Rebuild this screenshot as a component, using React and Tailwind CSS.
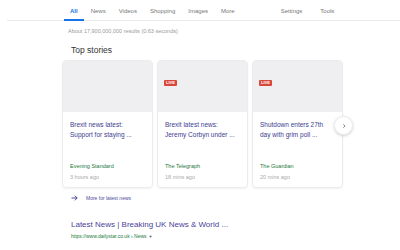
export default function App() {
  const tabs = ['All', 'News', 'Videos', 'Shopping', 'Images', 'More']
  const stories = [
    { live: false, title: ['Brexit news latest:', 'Support for staying ...'], source: 'Evening Standard', time: '3 hours ago' },
    { live: true, title: ['Brexit latest news:', 'Jeremy Corbyn under ...'], source: 'The Telegraph', time: '18 mins ago' },
    { live: true, title: ['Shutdown enters 27th', 'day with grim poll ...'], source: 'The Guardian', time: '20 mins ago' },
  ]

  return (
    <div className="w-[400px] h-[250px] bg-white overflow-hidden font-['Liberation_Sans',Arial,sans-serif] relative">
      <div className="ml-[7px] border-b border-[#ebebeb] h-[21px] flex items-start pl-[57px] relative">
        {tabs.map((t, i) => (
          <div
            key={t}
            className={
              'h-[21px] pt-[8px] text-[6px] leading-[7px] ' +
              (i === 0 ? 'text-[#1a73e8] font-bold border-b-[2px] border-[#1a73e8] px-[6px] mr-[7px]' : 'text-[#777] mr-[13px]')
            }
          >
            {t}
          </div>
        ))}
        <div className="ml-[33px] flex gap-[18px] pt-[8px] text-[6px] leading-[7px] text-[#777]">
          <span>Settings</span>
          <span>Tools</span>
        </div>
      </div>

      <div className="pl-[68px] pt-[7px] text-[5.5px] leading-[7px] text-[#9a9a9a]">
        About 17,900,000,000 results (0.63 seconds)
      </div>

      <div className="pl-[71px] pt-[10px] text-[8.5px] leading-[10px] text-[#333]">Top stories</div>

      <div className="pl-[62px] pt-[5px] flex gap-[4px] items-start relative">
        {stories.map((s, i) => (
          <div key={i} className="w-[91px] h-[128px] rounded-[4px] border border-[#ececec] shadow-[0_1px_2px_rgba(0,0,0,0.06)] overflow-hidden flex flex-col">
            <div className="h-[51px] bg-[#efeef0] px-[6px] pt-[6px]">
              {s.live && (
                <span className="inline-block bg-[#d9473a] text-white text-[4px] leading-[6px] px-[2px] rounded-[1px] font-bold">LIVE</span>
              )}
            </div>
            <div className="px-[7px] pt-[8px] text-[6.5px] leading-[10px] text-[#3d3d8f]">
              <div>{s.title[0]}</div>
              <div>{s.title[1]}</div>
            </div>
            <div className="mt-auto px-[7px] pb-[6px]">
              <div className="text-[5.5px] leading-[8px] text-[#1c7a3a]">{s.source}</div>
              <div className="text-[5.5px] leading-[8px] mt-[3px] text-[#aaa]">{s.time}</div>
            </div>
          </div>
        ))}
        <div className="absolute left-[334px] top-[61px] w-[19px] h-[19px] rounded-full bg-white border border-[#eee] shadow-[0_1px_3px_rgba(0,0,0,0.18)] flex items-center justify-center">
          <svg width="6" height="6" viewBox="0 0 24 24" fill="none" stroke="#666" strokeWidth="3">
            <path d="M9 5l7 7-7 7" />
          </svg>
        </div>
      </div>

      <div className="pl-[70px] pt-[6px] flex items-center gap-[7px]">
        <svg width="9" height="8" viewBox="0 0 24 24" fill="none" stroke="#4a4a9a" strokeWidth="3">
          <path d="M3 12h17M13 5l7 7-7 7" />
        </svg>
        <span className="text-[5px] leading-[8px] text-[#4a4a9a]">More for latest news</span>
      </div>

      <div className="pl-[71px] pt-[18px] text-[8px] leading-[10px] text-[#4a3f9a]">
        Latest News | Breaking UK News &amp; World ...
      </div>
      <div className="pl-[71px] pt-[3px] text-[5px] leading-[7px] text-[#1a7a3a] flex items-center gap-[2px]">
        https://www.dailystar.co.uk › News <span className="text-[4px] text-[#555]">▼</span>
      </div>
    </div>
  )
}
